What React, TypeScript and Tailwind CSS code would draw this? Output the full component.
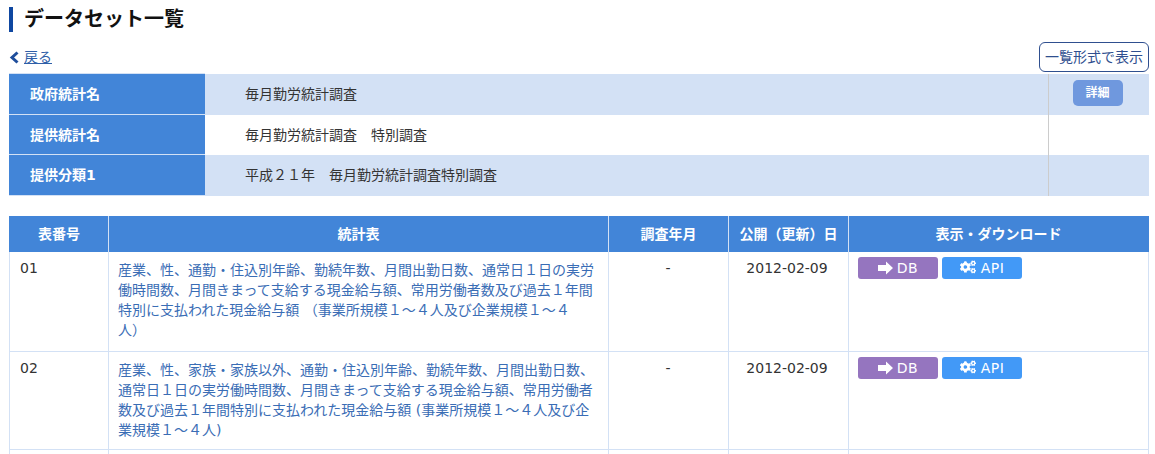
import React from "react";
import { FaCogs } from "react-icons/fa";

function Arrow() {
  return (
    <svg width="15" height="14" viewBox="0 0 15 14" className="inline-block" fill="currentColor">
      <path d="M0 4h8V0.5L15 7l-7 6.5V10H0z" />
    </svg>
  );
}

function Buttons() {
  return (
    <div className="flex gap-1">
      <span className="flex h-[22px] w-20 items-center justify-center gap-[4px] rounded-[3px] bg-[#9575bf] text-sm leading-none tracking-[0.5px] text-white">
        <Arrow />
        DB
      </span>
      <span className="flex h-[22px] w-20 items-center justify-center gap-[5px] rounded-[3px] bg-[#4299f7] text-sm leading-none tracking-[0.5px] text-white">
        <FaCogs className="mb-[2px] h-[14px] w-[16px]" />
        API
      </span>
    </div>
  );
}

const rows = [
  {
    no: "01",
    h: "h-[99px]",
    text: "産業、性、通勤・住込別年齢、勤続年数、月間出勤日数、通常日１日の実労働時間数、月間きまって支給する現金給与額、常用労働者数及び過去１年間特別に支払われた現金給与額 （事業所規模１～４人及び企業規模１～４人）",
  },
  {
    no: "02",
    h: "h-[98px]",
    text: "産業、性、家族・家族以外、通勤・住込別年齢、勤続年数、月間出勤日数、通常日１日の実労働時間数、月間きまって支給する現金給与額、常用労働者数及び過去１年間特別に支払われた現金給与額 (事業所規模１～４人及び企業規模１～４人)",
  },
];

const info = [
  { k: "政府統計名", v: "毎月勤労統計調査", bg: "bg-[#d3e1f5]", btn: true, h: "h-[41px]" },
  { k: "提供統計名", v: "毎月勤労統計調査　特別調査", bg: "bg-white", btn: false, h: "h-[40px]" },
  { k: "提供分類1", v: "平成２１年　毎月勤労統計調査特別調査", bg: "bg-[#d3e1f5]", btn: false, h: "h-[41px]" },
];

export default function App() {
  return (
    <div className="h-[454px] overflow-hidden bg-white pr-[6px] pl-[9px] font-['DejaVu_Sans','Noto_Sans_CJK_JP',sans-serif] text-sm text-[#333]">
      <h1 className="mt-[7px] flex h-[25px] items-center border-l-[4px] border-[#0f47a1] pb-[2px] pl-[11px] text-xl leading-none font-bold text-[#111]">
        データセット一覧
      </h1>
      <div className="mt-[10px] flex h-[31px] items-start justify-between">
        <a className="mt-[5px] flex items-center leading-5 text-[#2f5fa8]">
          <svg width="10" height="13" viewBox="0 0 10 13" fill="none" stroke="#1f4e9c" strokeWidth="3">
            <path d="M8.5 1.5 3 6.5l5.5 5" />
          </svg>
          <span className="pl-[5px] underline">戻る</span>
        </a>
        <a className="flex h-[30px] w-[110px] items-center justify-center rounded-[6px] border border-[#2f4f8f] text-[#2f4f8f]">
          一覧形式で表示
        </a>
      </div>

      <table className="w-[1140px] table-fixed border-collapse">
        <colgroup>
          <col className="w-[196px]" />
          <col className="w-[843px]" />
          <col className="w-[101px]" />
        </colgroup>
        <tbody>
          {info.map((r) => (
            <tr key={r.k} className={`${r.h} ${r.bg}`}>
              <th className="border-y border-[#d3e1f5] bg-[#4285d8] pl-[21px] text-left font-bold text-white">{r.k}</th>
              <td className="pl-[40px] text-[#333]">{r.v}</td>
              <td className="border-l border-[#cccccc] text-center">
                {r.btn && (
                  <span className="mb-[2px] ml-[24px] flex h-[26px] w-[50px] items-center justify-center rounded-[5px] bg-[#6f98de] text-xs font-bold text-white">
                    詳細
                  </span>
                )}
              </td>
            </tr>
          ))}
        </tbody>
      </table>

      <table className="mt-[20px] w-[1139px] table-fixed border-collapse">
        <colgroup>
          <col className="w-[99px]" />
          <col className="w-[500px]" />
          <col className="w-[120px]" />
          <col className="w-[120px]" />
          <col className="w-[300px]" />
        </colgroup>
        <thead>
          <tr className="h-[36px] bg-[#4285d8] text-white">
            {["表番号", "統計表", "調査年月", "公開（更新）日", "表示・ダウンロード"].map((t) => (
              <th key={t} className="border-x border-[#d3e1f5] text-center font-bold first:border-l-[#4285d8] last:border-r-[#4285d8]">
                {t}
              </th>
            ))}
          </tr>
        </thead>
        <tbody>
          {rows.map((r) => (
            <tr key={r.no} className={`${r.h} border-b border-[#d3e1f5]`}>
              <td className="border-x border-[#d3e1f5] pt-[6px] pl-[10px] align-top">{r.no}</td>
              <td className="border-r border-[#d3e1f5] pt-[8px] pr-[12px] pl-[9px] align-top leading-[20px] text-[#3a6db5] [text-spacing-trim:space-all]">{r.text}</td>
              <td className="border-r border-[#d3e1f5] pt-[6px] pr-[1px] text-center align-top">-</td>
              <td className="border-r border-[#d3e1f5] pt-[6px] pr-[3px] text-center align-top">2012-02-09</td>
              <td className="border-r border-[#d3e1f5] pt-[5px] pl-[9px] align-top">
                <Buttons />
              </td>
            </tr>
          ))}
          <tr className="h-[20px]">
            <td className="border-x border-[#d3e1f5]" />
            <td className="border-r border-[#d3e1f5]" />
            <td className="border-r border-[#d3e1f5]" />
            <td className="border-r border-[#d3e1f5]" />
            <td className="border-r border-[#d3e1f5]" />
          </tr>
        </tbody>
      </table>
    </div>
  );
}
